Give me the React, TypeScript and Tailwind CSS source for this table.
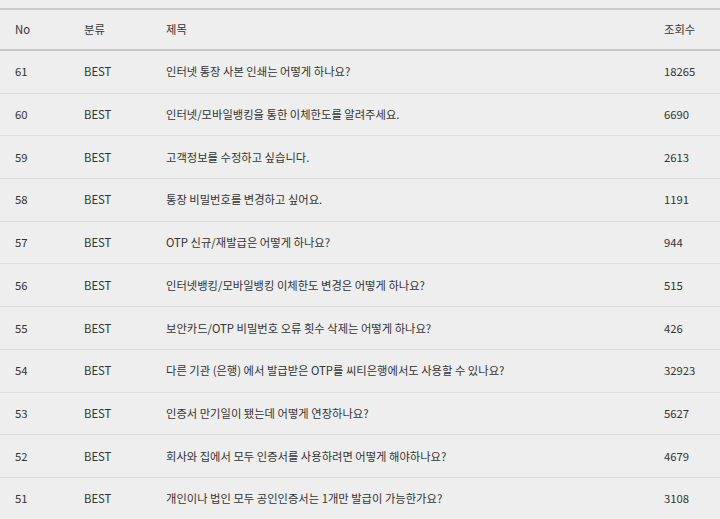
import React from "react";

const rows: [number, string, number][] = [
  [61, "인터넷 통장 사본 인쇄는 어떻게 하나요?", 18265],
  [60, "인터넷/모바일뱅킹을 통한 이체한도를 알려주세요.", 6690],
  [59, "고객정보를 수정하고 싶습니다.", 2613],
  [58, "통장 비밀번호를 변경하고 싶어요.", 1191],
  [57, "OTP 신규/재발급은 어떻게 하나요?", 944],
  [56, "인터넷뱅킹/모바일뱅킹 이체한도 변경은 어떻게 하나요?", 515],
  [55, "보안카드/OTP 비밀번호 오류 횟수 삭제는 어떻게 하나요?", 426],
  [54, "다른 기관 (은행) 에서 발급받은 OTP를 씨티은행에서도 사용할 수 있나요?", 32923],
  [53, "인증서 만기일이 됐는데 어떻게 연장하나요?", 5627],
  [52, "회사와 집에서 모두 인증서를 사용하려면 어떻게 해야하나요?", 4679],
  [51, "개인이나 법인 모두 공인인증서는 1개만 발급이 가능한가요?", 3108],
];

export default function App() {
  return (
    <div
      className="w-[720px] h-[519px] overflow-hidden bg-[#eeeeee] text-[#333333] text-[11.3px] pt-[8px]"
      style={{ fontFamily: '"Noto Sans CJK KR", "Noto Sans", sans-serif' }}
    >
      <div className="border-t-2 border-[#cccccc]">
        <div className="grid grid-cols-[69px_82px_498px_1fr] pl-[15px] h-[41px] items-center border-b-2 border-[#c6c6c6]">
          <div>No</div>
          <div>분류</div>
          <div>제목</div>
          <div>조회수</div>
        </div>
        {rows.map(([no, title, views]) => (
          <div
            key={no}
            className="grid grid-cols-[69px_82px_498px_1fr] pl-[15px] h-[42.7px] items-center border-b border-[#dcdcdc]"
          >
            <div>{no}</div>
            <div>BEST</div>
            <div className="whitespace-nowrap">{title}</div>
            <div>{views}</div>
          </div>
        ))}
      </div>
    </div>
  );
}
